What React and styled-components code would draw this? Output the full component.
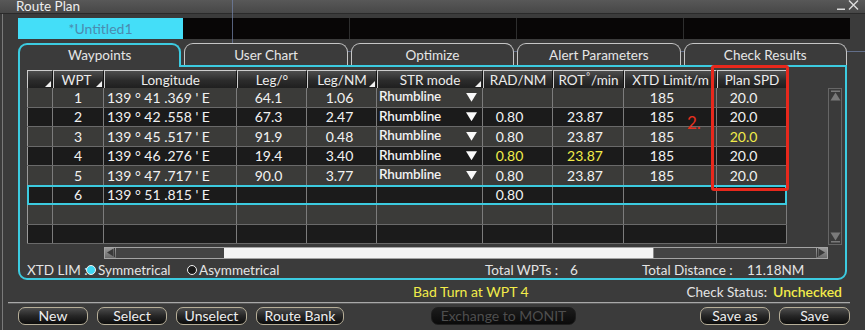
import React from 'react';
import styled, { createGlobalStyle, css } from 'styled-components';

const CYAN = '#3ccbe0';
const YELLOW = '#f2ec4a';
const COLS = '26px 51px 133px 70px 70px 106px 70px 71px 93px 70px';

const GlobalStyle = createGlobalStyle`
  html, body { margin: 0; padding: 0; background: #3b3b3b; }
  * { box-sizing: border-box; }
`;

const Window = styled.div`
  position: relative;
  width: 865px;
  height: 330px;
  overflow: hidden;
  background: #3b3b3b;
  color: #e6e6e6;
  font-family: Lato, "Open Sans", sans-serif;
  display: flex;
  flex-direction: column;
  box-shadow: inset 2px 0 0 #3b3b3b, inset 3px 0 0 #7a7a7a;
`;

const TitleBar = styled.div`
  flex: none;
  height: 14px;
  display: flex;
  justify-content: space-between;
  align-items: flex-start;
  padding: 0 6px 0 16px;
  background: linear-gradient(#585858, #474747);
  border-bottom: 1px solid #2a2a2a;
`;

const Title = styled.span`
  font-size: 13.5px;
  line-height: 13px;
  color: #ededed;
`;

const WinControls = styled.div`
  display: flex;
  gap: 2px;
`;

const FileRow = styled.div`
  flex: none;
  display: flex;
  margin: 4px 0 0 18px;
  width: 832px;
  height: 21px;
`;

const FileName = styled.div`
  width: 165px;
  flex: none;
  background: #44def8;
  color: #4a8cb0;
  font-size: 14px;
  display: flex;
  align-items: center;
  justify-content: center;
`;

const FileSlot = styled.div`
  flex: 1;
  background: #080606;
  border-left: ${p => (p.$divider ? '1px solid #2e2e2e' : 'none')};
`;

const Tabs = styled.div`
  position: relative;
  z-index: 1;
  flex: none;
  display: grid;
  grid-template-columns: repeat(5, 1fr);
  gap: 3px;
  align-items: start;
  margin: 4px 0 0 18px;
  width: 829px;
  height: 22px;
`;

const Tab = styled.div`
  height: ${p => (p.$active ? '24px' : '22px')};
  border: ${p => (p.$active ? `2px solid ${CYAN}` : '1.5px solid #c6c6c6')};
  border-bottom: none;
  border-radius: 9px 9px 0 0;
  background: #3b3b3b;
  display: flex;
  align-items: center;
  justify-content: center;
  padding-bottom: ${p => (p.$active ? '2px' : '0')};
  font-size: 13.5px;
  color: #e6e6e6;
`;

const Panel = styled.div`
  flex: none;
  margin-left: 18px;
  width: 829px;
  height: 215px;
  border: 2px solid ${CYAN};
  border-radius: 0 0 9px 9px;
  padding: 3px 0 0 7px;
  display: flex;
  flex-direction: column;
`;

const TableArea = styled.div`
  display: flex;
  align-items: flex-start;
`;

const Table = styled.div`
  width: 760px;
  display: flex;
  flex-direction: column;
`;

const HeadRow = styled.div`
  display: grid;
  grid-template-columns: ${COLS};
  height: 18px;
`;

const HeadCell = styled.div`
  position: relative;
  display: flex;
  align-items: center;
  justify-content: center;
  background: linear-gradient(#4e4e4e, #2c2c2c 55%, #1f1f1f);
  border-top: 1px solid #cdcdcd;
  border-left: 1px solid #cdcdcd;
  border-right: 1px solid #151515;
  font-size: 13.5px;
  color: #ececec;
  white-space: nowrap;
  padding-right: ${p => p.$pr || 0}px;
`;

const SortMark = styled.span`
  position: absolute;
  right: 1px;
  bottom: 1px;
  width: 6px;
  height: 6px;
  background: #f0f0f0;
  clip-path: polygon(100% 0, 100% 100%, 0 100%);
`;

const Sup = styled.span`
  font-size: 9px;
  position: relative;
  top: -3px;
  margin: 0 1px;
`;

const BodyRow = styled.div`
  position: relative;
  display: grid;
  grid-template-columns: ${COLS};
  height: 19.5px;
  background: ${p => (p.$dark ? '#1b1b1b' : '#3b3b39')};
  border-bottom: 1px solid #6a6a6a;
  ${p =>
    p.$selected &&
    css`
      &::after {
        content: '';
        position: absolute;
        left: 0;
        right: 0;
        top: -1px;
        bottom: -1px;
        border: 2px solid ${CYAN};
        pointer-events: none;
      }
    `}
`;

const Cell = styled.div`
  display: flex;
  align-items: center;
  justify-content: ${p => (p.$left ? 'flex-start' : 'center')};
  padding: 0 ${p => p.$pr || 0}px 0 ${p => p.$pl || 0}px;
  border-right: 1px solid #7c7c7c;
  &:first-child {
    border-left: 1px solid #9a9a9a;
  }
  font-size: 14px;
  color: ${p => (p.$hl ? YELLOW : '#f2f2f2')};
  white-space: nowrap;
  overflow: hidden;
`;

const StrCell = styled(Cell)`
  justify-content: space-between;
  padding: 0 5px 0 2px;
`;

const StrText = styled.span`
  font-size: 13.5px;
  font-weight: 600;
  letter-spacing: -0.2px;
  margin-top: -2px;
`;

const DropArrow = styled.span`
  width: 11px;
  height: 9px;
  background: #fafafa;
  clip-path: polygon(0 0, 100% 0, 50% 100%);
`;

const VScroll = styled.div`
  margin: 18px 0 0 41px;
  width: 14px;
  height: 157px;
  border: 1px solid #666;
  background: #3a3a3a;
  display: flex;
  flex-direction: column;
  justify-content: space-between;
  align-items: center;
  padding: 1px 0;
`;

const HScroll = styled.div`
  margin: 2px 0 0 77px;
  width: 724px;
  height: 12px;
  display: flex;
  border: 1px solid #a4a4a4;
  background: #444;
`;

const ScrollBtn = styled.div`
  flex: none;
  width: 11px;
  background: linear-gradient(#9a9a9a, #6a6a6a);
  display: flex;
  align-items: center;
  justify-content: center;
`;

const Thumb = styled.div`
  flex: none;
  margin-left: 108px;
  width: 430px;
  background: #f4f4f4;
  border-right: 1px solid #888;
`;

const Spacer = styled.div`
  flex: 1;
`;

const Footer = styled.div`
  margin-top: 3px;
  height: 17px;
  display: grid;
  grid-template-columns: 59px 101px 298px 85px 72px 105px 1fr;
  align-items: center;
  font-size: 13.5px;
  color: #e4e4e4;
  white-space: nowrap;
`;

const Option = styled.span`
  display: flex;
  align-items: center;
  gap: 2px;
`;

const Radio = styled.span`
  width: 10px;
  height: 10px;
  border-radius: 50%;
  border: 1.5px solid #f2f2f2;
  background: ${p => (p.$on ? '#3fd8f4' : '#1a1a1a')};
`;

const StatusRow = styled.div`
  flex: none;
  height: 22px;
  display: flex;
  align-items: center;
  padding-right: 23px;
  font-size: 14px;
`;

const Warning = styled.span`
  margin-left: 413px;
  color: ${YELLOW};
`;

const CheckStatus = styled.span`
  margin-left: auto;
  color: #e4e4e4;
  font-size: 13.5px;
`;

const Unchecked = styled.span`
  color: ${YELLOW};
  font-weight: 600;
  font-size: 14px;
  margin-left: 6px;
`;

const Separator = styled.div`
  flex: none;
  height: 2px;
  margin: 0 15px 0 8px;
  background: #a8a8a8;
  border-bottom: 1px solid #5a5a5a;
`;

const ButtonRow = styled.div`
  flex: none;
  display: flex;
  gap: 9px;
  margin-top: 3px;
  padding: 0 15px 0 18px;
  height: 18px;
`;

const Button = styled.button`
  width: ${p => p.$w}px;
  height: 18px;
  margin-left: ${p => (p.$push ? 'auto' : `${p.$ml || 0}px`)};
  padding: 0;
  border-radius: 7px;
  border: 1.5px solid ${p => (p.$disabled ? '#1e1e1e' : '#b6ae98')};
  background: ${p =>
    p.$disabled
      ? 'linear-gradient(#1c1c1c, #0a0a0a)'
      : 'linear-gradient(#4c4c4c, #262626 50%, #0c0c0c)'};
  color: ${p => (p.$disabled ? '#4e4e4e' : '#eeeeee')};
  font-family: Lato, "Open Sans", sans-serif;
  font-size: 14px;
  line-height: 1;
  display: flex;
  align-items: center;
  justify-content: center;
`;

const Highlight = styled.div`
  position: absolute;
  left: 711px;
  top: 65px;
  width: 78px;
  height: 126px;
  border: 3px solid #e8281c;
  border-radius: 3px;
  pointer-events: none;
`;

const Callout = styled.span`
  position: absolute;
  left: 687px;
  top: 114px;
  font-size: 17px;
  line-height: 1;
  color: #e8301e;
`;

const GuideLine = styled.svg`
  position: absolute;
  left: 0;
  top: 0;
  pointer-events: none;
`;

const rows = [
  { n: '1', lon: '139 ° 41 .369 \' E', leg: '64.1', nm: '1.06', str: true, rad: '', rot: '', xtd: '185', spd: '20.0' },
  { n: '2', lon: '139 ° 42 .558 \' E', leg: '67.3', nm: '2.47', str: true, rad: '0.80', rot: '23.87', xtd: '185', spd: '20.0' },
  { n: '3', lon: '139 ° 45 .517 \' E', leg: '91.9', nm: '0.48', str: true, rad: '0.80', rot: '23.87', xtd: '185', spd: '20.0', hlSpd: true },
  { n: '4', lon: '139 ° 46 .276 \' E', leg: '19.4', nm: '3.40', str: true, rad: '0.80', rot: '23.87', xtd: '185', spd: '20.0', hlRad: true, hlRot: true },
  { n: '5', lon: '139 ° 47 .717 \' E', leg: '90.0', nm: '3.77', str: true, rad: '0.80', rot: '23.87', xtd: '185', spd: '20.0' },
  { n: '6', lon: '139 ° 51 .815 \' E', leg: '', nm: '', str: false, rad: '0.80', rot: '', xtd: '', spd: '', selected: true },
  { n: '', lon: '', leg: '', nm: '', str: false, rad: '', rot: '', xtd: '', spd: '' },
  { n: '', lon: '', leg: '', nm: '', str: false, rad: '', rot: '', xtd: '', spd: '' },
];

const ArrowUp = () => (
  <svg width="11" height="11" viewBox="0 0 11 11">
    <rect x="1" y="0.5" width="9" height="1.5" fill="#7a7a7a" />
    <polygon points="5.5,2.5 10.5,10.5 0.5,10.5" fill="#7a7a7a" />
  </svg>
);

const ArrowDown = () => (
  <svg width="11" height="11" viewBox="0 0 11 11">
    <polygon points="0.5,0.5 10.5,0.5 5.5,8.5" fill="#7a7a7a" />
    <rect x="1" y="9" width="9" height="1.5" fill="#7a7a7a" />
  </svg>
);

const ArrowLeft = () => (
  <svg width="9" height="9" viewBox="0 0 9 9">
    <polygon points="7.5,0.5 7.5,8.5 1,4.5" fill="#3a3a3a" />
    <rect x="8" y="0" width="1" height="9" fill="#3a3a3a" />
  </svg>
);

const ArrowRight = () => (
  <svg width="9" height="9" viewBox="0 0 9 9">
    <polygon points="1.5,0.5 1.5,8.5 8,4.5" fill="#3a3a3a" />
    <rect x="0" y="0" width="1" height="9" fill="#3a3a3a" />
  </svg>
);

const TabNames = ['Waypoints', 'User Chart', 'Optimize', 'Alert Parameters', 'Check Results'];

export default function App() {
  return (
    <>
      <GlobalStyle />
      <Window>
        <TitleBar>
          <Title>Route Plan</Title>
          <WinControls>
            <svg width="9" height="11" viewBox="0 0 9 11">
              <rect x="0" y="8.5" width="8" height="1.5" fill="#dcdcdc" />
            </svg>
            <svg width="11" height="11" viewBox="0 0 11 11">
              <path d="M1 0.5 L10 9.5 M10 0.5 L1 9.5" stroke="#dcdcdc" strokeWidth="1.4" />
            </svg>
          </WinControls>
        </TitleBar>

        <FileRow>
          <FileName>*Untitled1</FileName>
          <FileSlot />
          <FileSlot $divider />
          <FileSlot $divider />
          <FileSlot $divider />
        </FileRow>

        <Tabs>
          {TabNames.map((t, i) => (
            <Tab key={t} $active={i === 0}>
              {t}
            </Tab>
          ))}
        </Tabs>

        <Panel>
          <TableArea>
            <Table>
              <HeadRow>
                <HeadCell><SortMark /></HeadCell>
                <HeadCell $pr={4}>WPT<SortMark /></HeadCell>
                <HeadCell>Longitude</HeadCell>
                <HeadCell>Leg/°</HeadCell>
                <HeadCell>Leg/NM<SortMark /></HeadCell>
                <HeadCell>STR mode<SortMark /></HeadCell>
                <HeadCell>RAD/NM</HeadCell>
                <HeadCell>ROT<Sup>°</Sup>/min</HeadCell>
                <HeadCell>XTD Limit/m</HeadCell>
                <HeadCell>Plan SPD</HeadCell>
              </HeadRow>
              {rows.map((r, i) => (
                <BodyRow key={i} $dark={i % 2 === 1} $selected={r.selected}>
                  <Cell />
                  <Cell>{r.n}</Cell>
                  <Cell $left $pl={3}>{r.lon}</Cell>
                  <Cell $pr={6}>{r.leg}</Cell>
                  <Cell $pr={4}>{r.nm}</Cell>
                  {r.str ? (
                    <StrCell>
                      <StrText>Rhumbline</StrText>
                      <DropArrow />
                    </StrCell>
                  ) : (
                    <Cell />
                  )}
                  <Cell $pr={16} $hl={r.hlRad}>{r.rad}</Cell>
                  <Cell $pr={6} $hl={r.hlRot}>{r.rot}</Cell>
                  <Cell $pr={16}>{r.xtd}</Cell>
                  <Cell $pr={16} $hl={r.hlSpd}>{r.spd}</Cell>
                </BodyRow>
              ))}
            </Table>
            <VScroll>
              <ArrowUp />
              <ArrowDown />
            </VScroll>
          </TableArea>

          <HScroll>
            <ScrollBtn><ArrowLeft /></ScrollBtn>
            <Thumb />
            <Spacer />
            <ScrollBtn><ArrowRight /></ScrollBtn>
          </HScroll>

          <Footer>
            <span>XTD LIM :</span>
            <Option><Radio $on />Symmetrical</Option>
            <Option><Radio />Asymmetrical</Option>
            <span>Total WPTs :</span>
            <span>6</span>
            <span>Total Distance :</span>
            <span>11.18NM</span>
          </Footer>
        </Panel>

        <StatusRow>
          <Warning>Bad Turn at WPT 4</Warning>
          <CheckStatus>
            Check Status:<Unchecked>Unchecked</Unchecked>
          </CheckStatus>
        </StatusRow>

        <Separator />

        <ButtonRow>
          <Button $w={70}>New</Button>
          <Button $w={70}>Select</Button>
          <Button $w={71}>Unselect</Button>
          <Button $w={88}>Route Bank</Button>
          <Button $w={145} $ml={78} $disabled disabled>Exchange to MONIT</Button>
          <Button $w={70} $push>Save as</Button>
          <Button $w={71}>Save</Button>
        </ButtonRow>

        <GuideLine width="865" height="60">
          <polyline points="232.5,0 232.5,51.5 865,51.5" fill="none" stroke="#7080a4" strokeWidth="1" opacity="0.75" />
        </GuideLine>
        <Highlight />
        <Callout>2.</Callout>
      </Window>
    </>
  );
}
